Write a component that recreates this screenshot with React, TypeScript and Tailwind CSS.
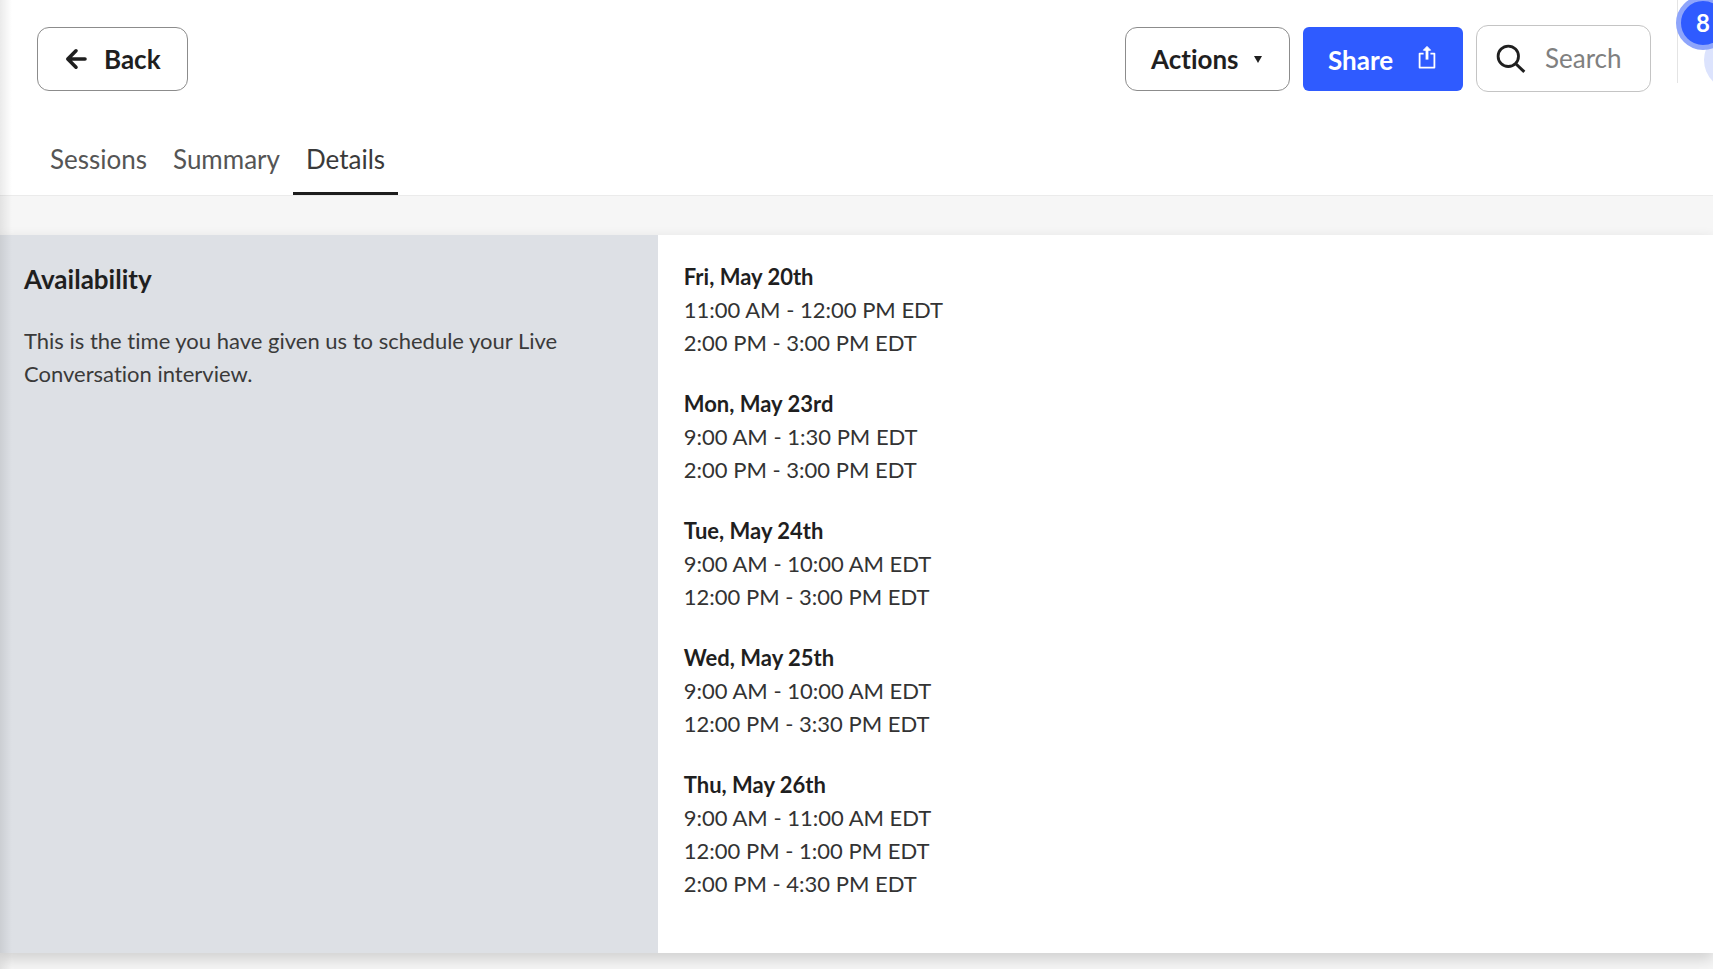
const days = [
  { date: "Fri, May 20th", times: ["11:00 AM - 12:00 PM EDT", "2:00 PM - 3:00 PM EDT"] },
  { date: "Mon, May 23rd", times: ["9:00 AM - 1:30 PM EDT", "2:00 PM - 3:00 PM EDT"] },
  { date: "Tue, May 24th", times: ["9:00 AM - 10:00 AM EDT", "12:00 PM - 3:00 PM EDT"] },
  { date: "Wed, May 25th", times: ["9:00 AM - 10:00 AM EDT", "12:00 PM - 3:30 PM EDT"] },
  {
    date: "Thu, May 26th",
    times: ["9:00 AM - 11:00 AM EDT", "12:00 PM - 1:00 PM EDT", "2:00 PM - 4:30 PM EDT"],
  },
];

const tabs = ["Sessions", "Summary", "Details"];

function Header() {
  return (
    <header className="flex h-[118px] items-start justify-between overflow-hidden pl-[37px]">
      <button
        type="button"
        className="mt-[27px] flex h-16 items-center gap-4 rounded-xl border border-[#8c8c8c] px-[26px] text-[26px] font-bold"
      >
        <svg className="h-6 w-6" viewBox="0 0 24 24" fill="none" stroke="currentColor" strokeWidth="3.6" strokeLinecap="round" strokeLinejoin="round" aria-hidden="true">
          <path d="M21 12H4M12 3.8 3.8 12l8.2 8.2" />
        </svg>
        Back
      </button>

      <div className="flex items-start">
        <button
          type="button"
          className="mt-[27px] mr-[13px] flex h-16 w-[165px] items-center justify-between rounded-xl border border-[#8c8c8c] pr-[27px] pl-[25px] text-[26px] font-bold"
        >
          Actions
          <svg className="h-[7px] w-2" viewBox="0 0 8 7" fill="currentColor" aria-hidden="true">
            <path d="M0 0h8L4 7z" />
          </svg>
        </button>
        <button
          type="button"
          className="mt-[27px] mr-[13px] flex h-16 w-40 items-center justify-between rounded-md bg-[#2f5bff] pt-0.5 pr-[27px] pl-[25px] text-[26px] font-bold text-white"
        >
          Share
          <svg className="mb-[6px] h-6 w-[18px]" viewBox="0 0 18 24" fill="none" stroke="currentColor" aria-hidden="true">
            <path d="M5.6 8.6H1.6V22.6H16.4V8.6H12.4" strokeWidth="1.8" strokeLinejoin="round" />
            <path d="M9 14.6V4" strokeWidth="2.8" />
            <path d="M9 1.4 12.6 5.2H5.4z" fill="currentColor" strokeWidth="1" strokeLinejoin="round" />
          </svg>
        </button>
        <label className="mt-[25px] mr-[26px] flex h-[67px] w-[175px] items-center rounded-xl border border-[#c4c4c4] pl-[19px]">
          <svg className="h-[30px] w-[30px] shrink-0" viewBox="0 0 30 30" fill="none" stroke="currentColor" aria-hidden="true">
            <circle cx="12.3" cy="12.3" r="10.2" strokeWidth="2.8" />
            <path d="m19.5 19.5 8.8 8.4" strokeWidth="3" />
          </svg>
          <input
            type="text"
            aria-label="Search"
            placeholder="Search"
            className="ml-[19px] w-full min-w-0 bg-transparent text-[26px] outline-none placeholder:text-[#808080]"
          />
        </label>
        <div className="relative h-[83px] w-9 border-l border-[#e4e4e4]">
          <span className="absolute top-[30px] left-[26px] h-[60px] w-[60px] rounded-full bg-[#dce3fd]" />
          <span className="absolute -top-1 -left-[2px] flex h-[54px] w-[54px] items-center justify-center rounded-full border-[5px] border-[#8ea5fb] bg-[#2f5bff] text-2xl font-bold text-white">
            8
          </span>
        </div>
      </div>
    </header>
  );
}

function Tabs() {
  return (
    <nav className="flex h-[78px] border-b border-[#ebebeb] pl-[37px] text-[26px] text-[#555555]">
      {tabs.map((tab) => (
        <a
          key={tab}
          href={"#" + tab.toLowerCase()}
          className={
            tab === "Details"
              ? "border-b-[3px] border-[#1d1d1d] px-[13px] pt-[25px] leading-8 text-[#3a3a3a]"
              : "px-[13px] pt-[25px] leading-8"
          }
        >
          {tab}
        </a>
      ))}
    </nav>
  );
}

export default function App() {
  return (
    <div className="relative min-h-screen overflow-hidden bg-[#f6f6f6] font-['Lato',sans-serif] text-[#1f1f1f] [font-variant-ligatures:none]">
      <div className="bg-white">
        <Header />
        <Tabs />
      </div>
      <main className="mt-[39px] grid grid-cols-[38.4%_1fr] shadow-[0_6px_14px_rgba(0,0,0,0.16)]">
        <section className="bg-[#dde0e5] pt-[26px] pr-16 pl-6">
          <h2 className="text-[26px] leading-9 font-bold">Availability</h2>
          <p className="mt-[27px] text-[22px] leading-[33px] text-[#3a3a3a]">
            This is the time you have given us to schedule your Live Conversation interview.
          </p>
        </section>
        <section className="flex flex-col gap-7 bg-white pt-[25px] pb-[53px] pl-[26px] text-[22px] leading-[33px]">
          {days.map((day) => (
            <div key={day.date}>
              <h3 className="font-bold">{day.date}</h3>
              {day.times.map((time) => (
                <p key={time} className="text-[#333333]">
                  {time}
                </p>
              ))}
            </div>
          ))}
        </section>
      </main>
      <div className="pointer-events-none absolute inset-y-0 left-0 w-3 bg-linear-to-r from-black/8 to-transparent" />
    </div>
  );
}
